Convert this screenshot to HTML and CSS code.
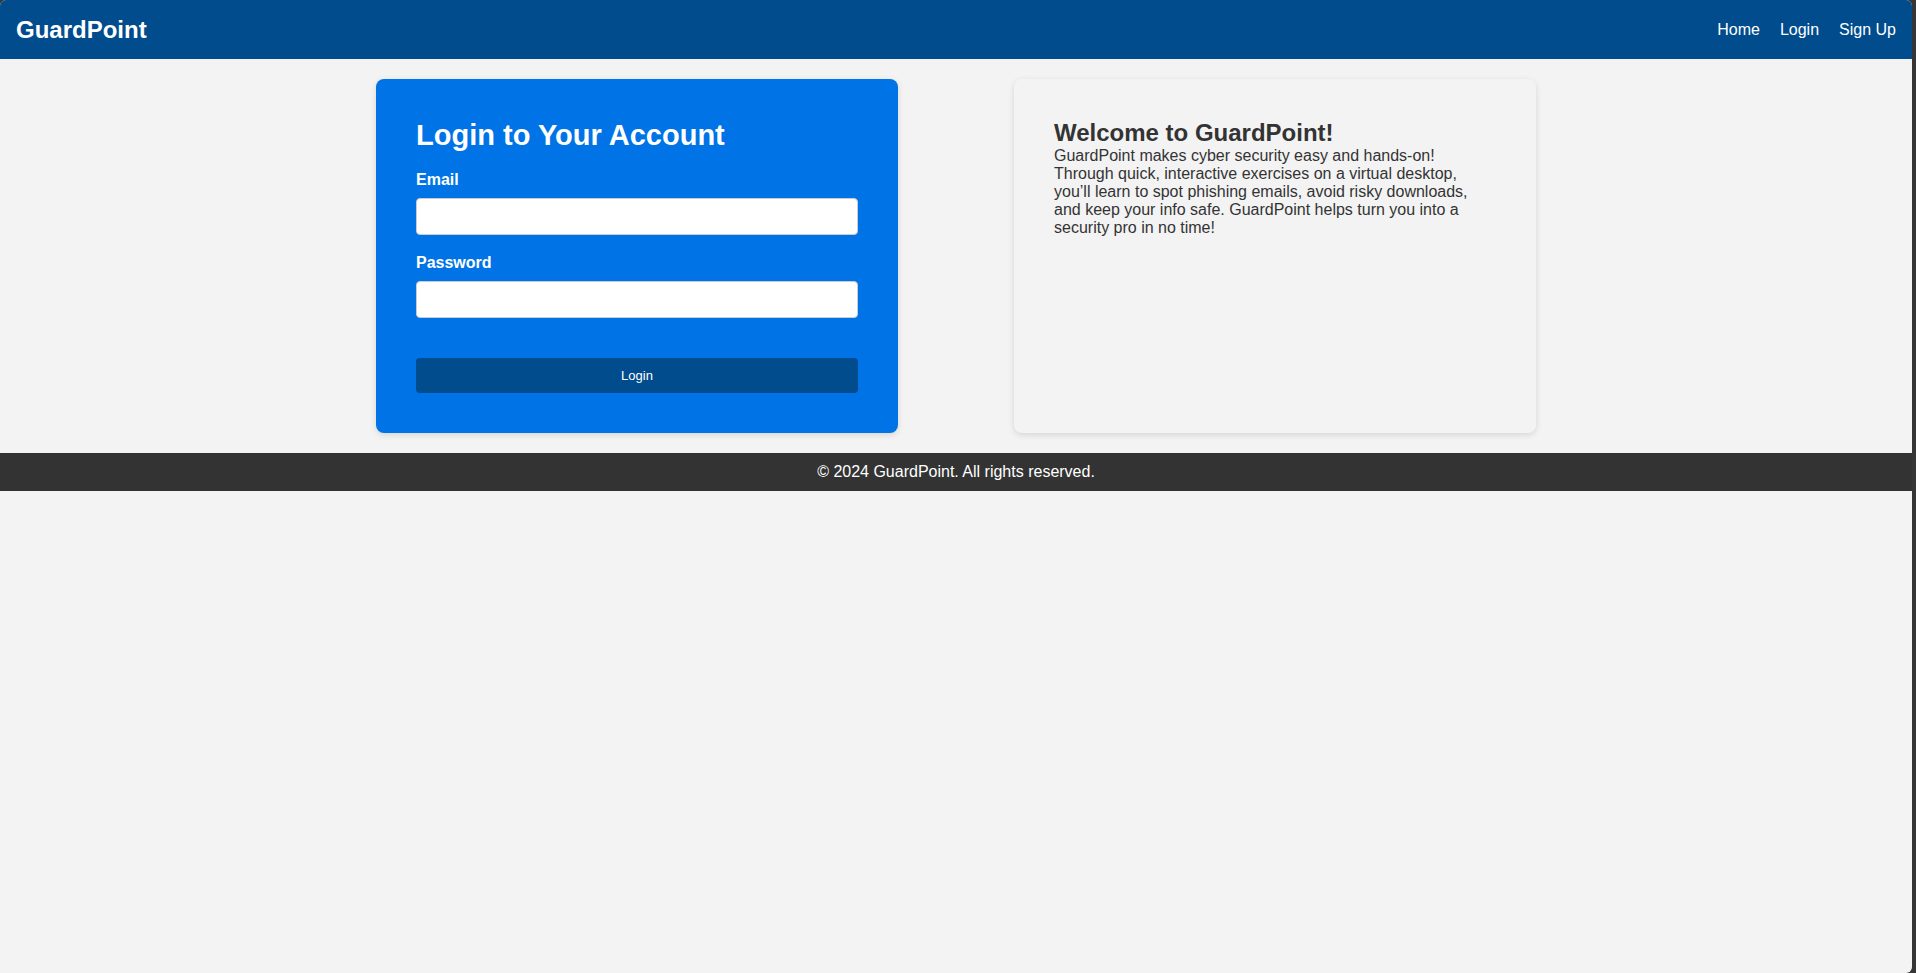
FILE: index.html
```html
<!DOCTYPE html>
<html lang="en">
<head>
<meta charset="utf-8">
<title>GuardPoint - Login</title>
<link rel="stylesheet" href="styles.css">
</head>
<body>
<div class="window">
  <header class="topbar">
    <h1 class="brand">GuardPoint</h1>
    <nav class="nav">
      <a href="#" class="nav-link">Home</a>
      <a href="#" class="nav-link">Login</a>
      <a href="#" class="nav-link">Sign Up</a>
    </nav>
  </header>
  <main class="content">
    <section class="card card-login">
      <h2 class="login-title">Login to Your Account</h2>
      <form class="login-form">
        <div class="form-group">
          <label class="form-label" for="email">Email</label>
          <input class="form-input" type="email" id="email">
        </div>
        <div class="form-group">
          <label class="form-label" for="password">Password</label>
          <input class="form-input" type="password" id="password">
        </div>
        <button type="button" class="login-btn">Login</button>
      </form>
    </section>
    <section class="card card-welcome">
      <h2 class="welcome-title">Welcome to GuardPoint!</h2>
      <p class="welcome-text">GuardPoint makes cyber security easy and hands-on! Through quick, interactive exercises on a virtual desktop, you’ll learn to spot phishing emails, avoid risky downloads, and keep your info safe. GuardPoint helps turn you into a security pro in no time!</p>
    </section>
  </main>
  <footer class="footer">© 2024 GuardPoint. All rights reserved.</footer>
</div>
</body>
</html>
```

FILE: styles.css
```css
html, body {
  margin: 0;
  padding: 0;
  height: 100%;
}
html {
  background: #363636;
}
body {
  font-family: "Liberation Sans", Arial, sans-serif;
  font-size: 16px;
  color: #333;
}
.window {
  width: 1912px;
  height: 973px;
  background: #f3f3f3;
  border-radius: 6px 6px 6px 0;
  overflow: hidden;
}
.topbar {
  background: #004c8c;
  color: #fff;
  display: flex;
  align-items: center;
  justify-content: space-between;
  padding: 16px 16px;
  height: 59px;
  box-sizing: border-box;
}
.brand {
  margin: 0;
  font-size: 24px;
  font-weight: bold;
}
.nav {
  display: flex;
  gap: 20px;
}
.nav-link {
  color: #fff;
  text-decoration: none;
  font-size: 16px;
}
.content {
  display: flex;
  justify-content: center;
  gap: 116px;
  padding: 20px 0;
}
.card {
  width: 522px;
  box-sizing: border-box;
  padding: 40px;
  border-radius: 8px;
  box-shadow: 0 2px 6px rgba(0, 0, 0, 0.12);
}
.card-login {
  background: #0073e6;
  color: #fff;
}
.card-welcome {
  background: #f3f3f3;
}
.login-title {
  margin: 0 0 20px;
  font-size: 29px;
  line-height: 32px;
  font-weight: bold;
}
.login-form {
  display: flex;
  flex-direction: column;
}
.form-group {
  display: flex;
  flex-direction: column;
  margin-bottom: 19px;
}
.form-label {
  font-weight: bold;
  font-size: 16px;
  margin-bottom: 9px;
}
.form-input {
  height: 37px;
  box-sizing: border-box;
  border: 1px solid #ccc;
  border-radius: 4px;
  background: #fff;
  font-size: 16px;
  padding: 8px;
}
.login-btn {
  margin-top: 21px;
  height: 35px;
  border: none;
  border-radius: 4px;
  background: #004c8c;
  color: #fff;
  font-family: "Liberation Sans", Arial, sans-serif;
  font-size: 13px;
  cursor: pointer;
}
.welcome-title {
  margin: 0;
  font-size: 24px;
  font-weight: bold;
  color: #333;
}
.welcome-text {
  margin: 0;
  font-size: 16px;
  line-height: 18px;
  color: #333;
}
.footer {
  background: #333;
  color: #fff;
  text-align: center;
  padding: 10px 0;
  font-size: 16px;
}
```
